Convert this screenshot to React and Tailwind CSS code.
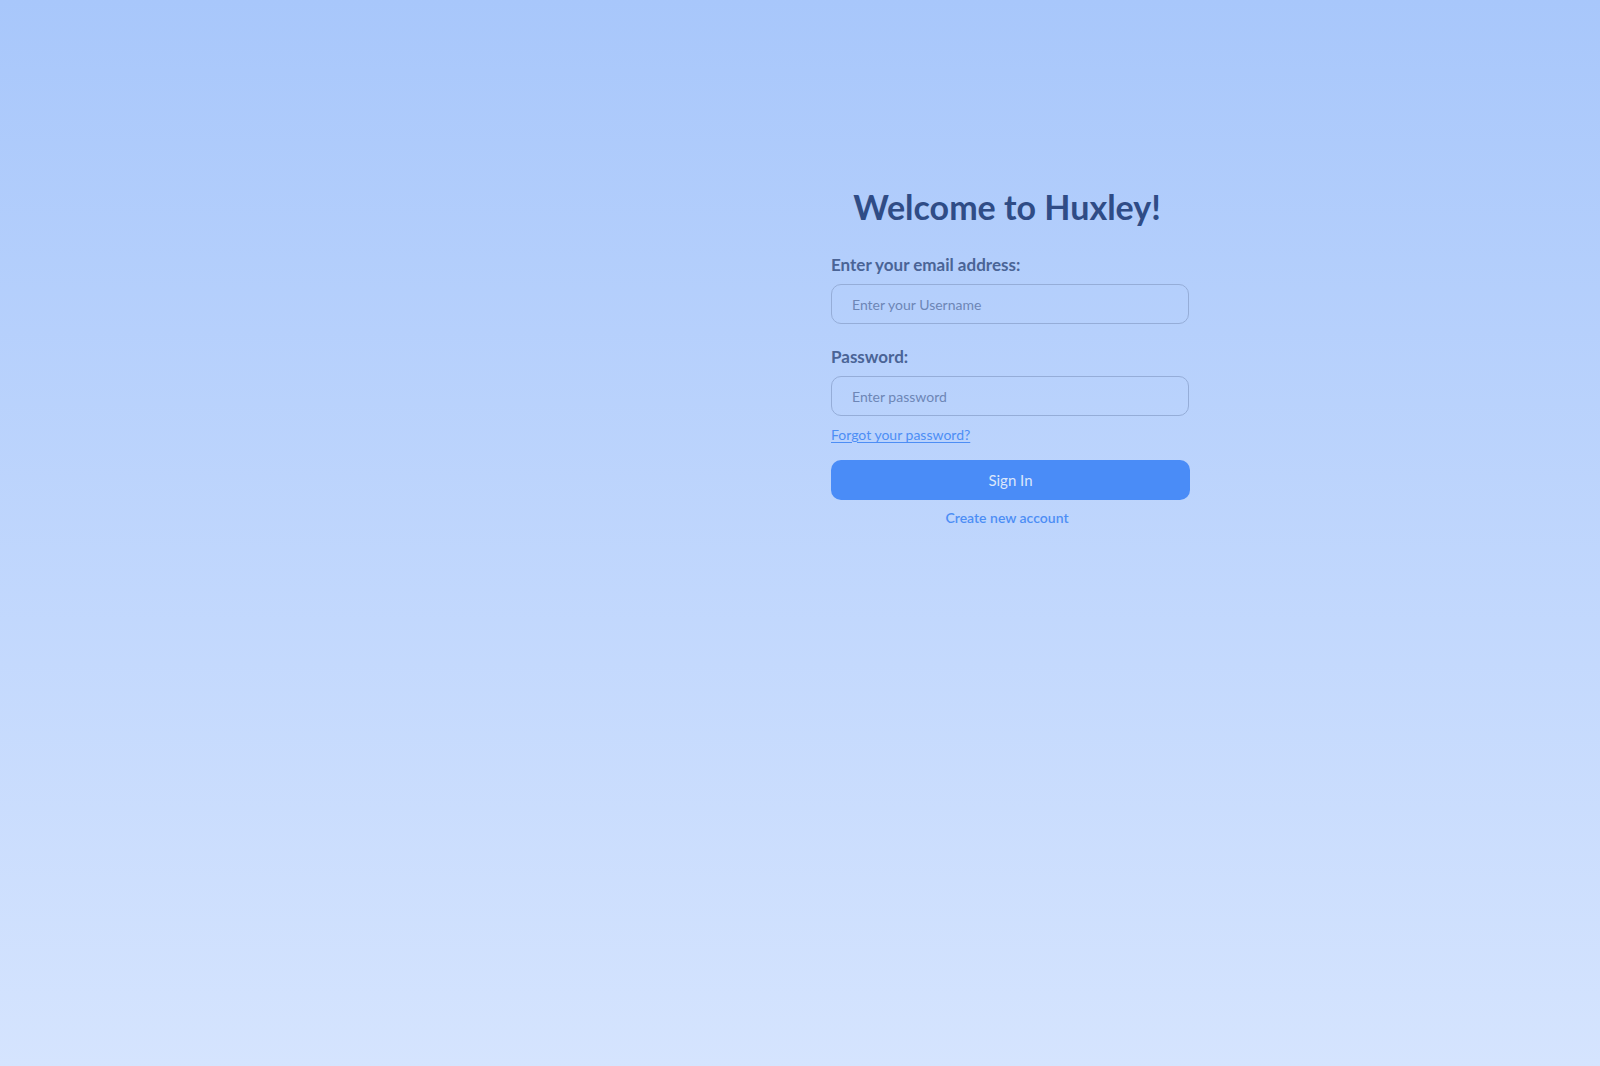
export default function App() {
  return (
    <div
      className="min-h-[1066px] w-full bg-gradient-to-b from-[#a8c7fb] to-[#d5e4fe]"
      style={{ fontFamily: "Lato, 'Noto Sans', sans-serif" }}
    >
      <div className="flex pt-[187px]">
        <div className="w-[831px] shrink-0" />
        <div className="w-[360px] flex flex-col">
          <h1 className="text-[34px] leading-[40px] font-bold text-[#2f4c86] text-center pr-2">
            Welcome to Huxley!
          </h1>
          <label className="mt-[26px] text-[17px] leading-[24px] font-bold text-[#4a6496]">
            Enter your email address:
          </label>
          <input
            className="mt-[7px] h-[40px] w-[358px] rounded-[10px] border border-[#95add8] bg-transparent px-[20px] text-[14px] text-[#40598a] placeholder:text-[#6d86b6] outline-none"
            placeholder="Enter your Username"
          />
          <label className="mt-[21px] text-[17px] leading-[24px] font-bold text-[#4a6496]">
            Password:
          </label>
          <input
            type="password"
            className="mt-[7px] h-[40px] w-[358px] rounded-[10px] border border-[#95add8] bg-transparent px-[20px] text-[14px] text-[#40598a] placeholder:text-[#6d86b6] outline-none"
            placeholder="Enter password"
          />
          <a
            href="#"
            className="mt-[9px] self-start text-[14px] leading-[20px] text-[#4d8ef5] underline underline-offset-2"
          >
            Forgot your password?
          </a>
          <button className="mt-[15px] h-[40px] w-[359px] rounded-[10px] bg-[#4a8cf7] text-[15px] text-[#dbe7fb]">
            Sign In
          </button>
          <a
            href="#"
            className="mt-[8px] self-center mr-2 text-[14px] leading-[20px] font-semibold text-[#4d8ef5]"
          >
            Create new account
          </a>
        </div>
      </div>
    </div>
  );
}
